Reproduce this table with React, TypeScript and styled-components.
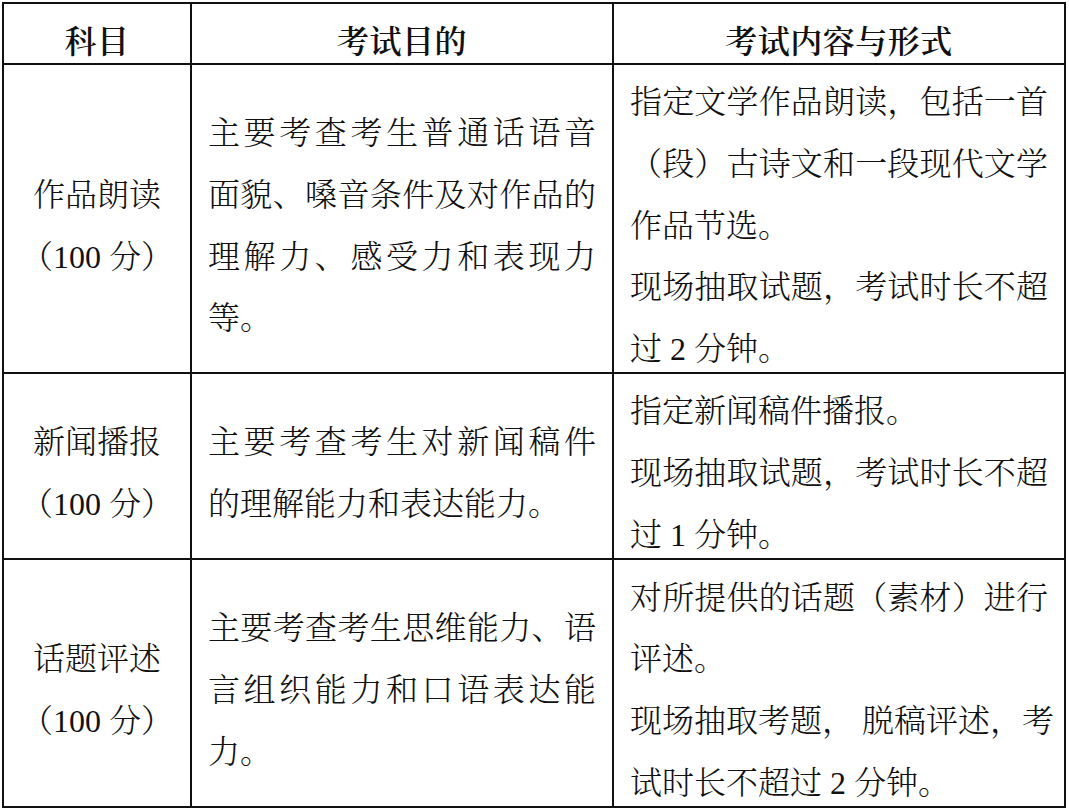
import React from "react";
import styled, { createGlobalStyle } from "styled-components";

const Global = createGlobalStyle`
	html, body {
		margin: 0;
		padding: 0;
		background: #fff;
	}
	body {
		font-family: "Liberation Serif", "Noto Serif CJK SC", "Noto Sans CJK SC", serif;
		color: #111;
	}
`;

const Page = styled.div`
	padding: 2px;
	width: 1069px;
	height: 811px;
	box-sizing: border-box;
`;

const Table = styled.div`
	display: grid;
	grid-template-columns: 186px 420px 450px;
	grid-template-rows: 59px 307px 184px 246px;
	gap: 2px;
	padding: 2px;
	width: max-content;
	background: #111;
`;

const HeadCell = styled.div`
	background: #fff;
	display: flex;
	align-items: center;
	justify-content: center;
	padding-top: 10px;
	box-sizing: border-box;
	font-size: 32px;
	font-weight: 600;
	letter-spacing: 0.5px;
`;

const Cell = styled.div<{ $align?: "center" | "left" }>`
	background: #fff;
	display: flex;
	flex-direction: column;
	justify-content: center;
	align-items: ${(p) => (p.$align === "center" ? "center" : "stretch")};
	padding: 16px 16px 0;
	box-sizing: border-box;
	font-size: 32px;
	font-weight: 300;
	line-height: 61.75px;
`;

const Line = styled.div<{ $full?: boolean }>`
	white-space: nowrap;
	text-align: left;
	text-align-last: ${(p) => (p.$full ? "justify" : "auto")};
`;

type L = { t: string; full?: boolean };

const rows: { subject: string[]; purpose: L[]; content: L[] }[] = [
	{
		subject: ["作品朗读", "（100 分）"],
		purpose: [
			{ t: "主要考查考生普通话语音", full: true },
			{ t: "面貌、嗓音条件及对作品的", full: true },
			{ t: "理解力、感受力和表现力", full: true },
			{ t: "等。" },
		],
		content: [
			{ t: "指定文学作品朗读，包括一首", full: true },
			{ t: "（段）古诗文和一段现代文学", full: true },
			{ t: "作品节选。" },
			{ t: "现场抽取试题，考试时长不超", full: true },
			{ t: "过 2 分钟。" },
		],
	},
	{
		subject: ["新闻播报", "（100 分）"],
		purpose: [
			{ t: "主要考查考生对新闻稿件", full: true },
			{ t: "的理解能力和表达能力。" },
		],
		content: [
			{ t: "指定新闻稿件播报。" },
			{ t: "现场抽取试题，考试时长不超", full: true },
			{ t: "过 1 分钟。" },
		],
	},
	{
		subject: ["话题评述", "（100 分）"],
		purpose: [
			{ t: "主要考查考生思维能力、语", full: true },
			{ t: "言组织能力和口语表达能", full: true },
			{ t: "力。" },
		],
		content: [
			{ t: "对所提供的话题（素材）进行", full: true },
			{ t: "评述。" },
			{ t: "现场抽取考题， 脱稿评述，考", full: true },
			{ t: "试时长不超过 2 分钟。" },
		],
	},
];

export default function App() {
	return (
		<Page>
			<Global />
			<Table>
				<HeadCell>科目</HeadCell>
				<HeadCell>考试目的</HeadCell>
				<HeadCell>考试内容与形式</HeadCell>
				{rows.map((r) => (
					<React.Fragment key={r.subject[0]}>
						<Cell $align="center">
							{r.subject.map((s) => (
								<Line key={s}>{s}</Line>
							))}
						</Cell>
						<Cell>
							{r.purpose.map((l) => (
								<Line key={l.t} $full={l.full}>
									{l.t}
								</Line>
							))}
						</Cell>
						<Cell>
							{r.content.map((l, i) => (
								<Line key={i} $full={l.full}>
									{l.t}
								</Line>
							))}
						</Cell>
					</React.Fragment>
				))}
			</Table>
		</Page>
	);
}
